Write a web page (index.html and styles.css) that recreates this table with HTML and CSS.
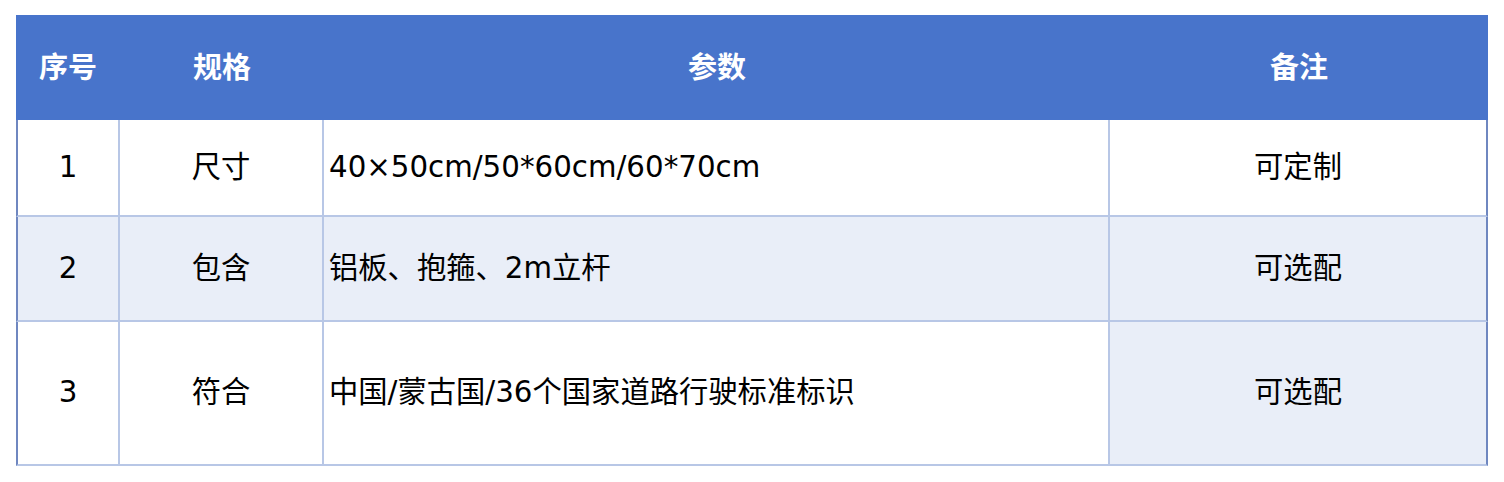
FILE: index.html
```html
<!DOCTYPE html>
<html lang="zh-CN">
<head>
<meta charset="utf-8">
<title>规格参数</title>
<link rel="stylesheet" href="styles.css">
</head>
<body>
<table class="spec">
  <colgroup>
    <col class="c-no">
    <col class="c-name">
    <col class="c-param">
    <col class="c-note">
  </colgroup>
  <thead>
    <tr class="head">
      <th>序号</th>
      <th>规格</th>
      <th>参数</th>
      <th>备注</th>
    </tr>
  </thead>
  <tbody>
    <tr class="r1">
      <td class="center">1</td>
      <td class="center">尺寸</td>
      <td class="param">40×50cm/50*60cm/60*70cm</td>
      <td class="center last">可定制</td>
    </tr>
    <tr class="r2 shade">
      <td class="center">2</td>
      <td class="center">包含</td>
      <td class="param">铝板、抱箍、2m立杆</td>
      <td class="center last">可选配</td>
    </tr>
    <tr class="r3">
      <td class="center">3</td>
      <td class="center">符合</td>
      <td class="param">中国/蒙古国/36个国家道路行驶标准标识</td>
      <td class="center last tint">可选配</td>
    </tr>
  </tbody>
</table>
</body>
</html>
```

FILE: styles.css
```css
html, body {
  margin: 0;
  padding: 0;
  background: #ffffff;
}

body {
  padding: 15px 16px 0 16px;
  font-family: "DejaVu Sans", "Noto Sans CJK SC", sans-serif;
  font-size: 29.3px;
  color: #000000;
}

.spec {
  width: 1472px;
  table-layout: fixed;
  border-collapse: separate;
  border-spacing: 0;
}

.c-no { width: 104px; }
.c-name { width: 204px; }
.c-param { width: 786px; }
.c-note { width: 378px; }

.head th {
  background: #4874cb;
  color: #ffffff;
  font-weight: 700;
  height: 101px;
  padding: 0 0 4px 0;
  text-align: center;
  vertical-align: middle;
  font-family: "Noto Sans CJK SC", sans-serif;
  font-size: 29px;
  line-height: 1.2;
}

.spec td {
  padding: 0;
  vertical-align: middle;
  border-right: 2px solid #b8c7e6;
  border-bottom: 2px solid #b8c7e6;
  line-height: 1.2;
}

.spec td:first-child {
  border-left: 2px solid #6f87c0;
}

.spec td.last {
  border-right: 2px solid #6f87c0;
}

.center {
  text-align: center;
}

.param {
  text-align: left;
  padding-left: 5px !important;
}

.r1 td { height: 95px; }
.r2 td { height: 103px; }
.r3 td { height: 142px; }

.shade td {
  background: #e9eef8;
}

.tint {
  background: #e9eef8;
}
```
